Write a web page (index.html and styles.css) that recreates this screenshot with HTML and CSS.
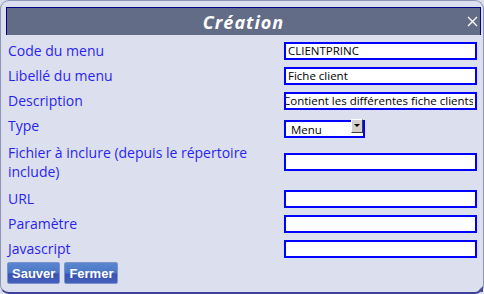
FILE: index.html
```html
<!DOCTYPE html>
<html lang="fr">
<head>
    <meta charset="UTF-8">
    <title>Création</title>
    <link rel="stylesheet" href="styles.css">
</head>
<body>
    <div class="dialog">
        <div class="titlebar">
            <span class="title">Création</span>
            <svg class="close" width="11" height="11" viewBox="0 0 11 11">
                <path d="M1 1 L10 10 M10 1 L1 10" stroke="#ffffff" stroke-width="1.3" fill="none"/>
            </svg>
        </div>

        <div class="form">
            <label class="label">Code du menu</label>
            <div class="field"><input class="input" type="text" value="CLIENTPRINC"></div>

            <label class="label">Libellé du menu</label>
            <div class="field"><input class="input" type="text" value="Fiche client"></div>

            <label class="label">Description</label>
            <div class="field"><input class="input scrolled" type="text" value="Contient les différentes fiche clients"></div>

            <label class="label">Type</label>
            <div class="field">
                <div class="select-wrap">
                    <select class="select">
                        <option>Menu</option>
                        <option>Lien</option>
                    </select>
                    <span class="select-arrow"></span>
                </div>
            </div>

            <label class="label label-tall">Fichier à inclure (depuis le répertoire include)</label>
            <div class="field"><input class="input" type="text"></div>

            <label class="label">URL</label>
            <div class="field"><input class="input" type="text"></div>

            <label class="label">Paramètre</label>
            <div class="field"><input class="input" type="text"></div>

            <label class="label">Javascript</label>
            <div class="field"><input class="input" type="text"></div>
        </div>

        <div class="buttons">
            <button class="button">Sauver</button>
            <button class="button">Fermer</button>
        </div>

        <span class="grip"></span>
    </div>
</body>
</html>
```

FILE: styles.css
```css
body {
    margin: 0;
    font-family: "Open Sans", sans-serif;
    background-color: #dce0ee;
}
.dialog {
    position: relative;
    box-sizing: border-box;
    width: 484px;
    height: 294px;
    background-color: #dce0ee;
    border: 1px solid #8d94b6;
    border-bottom: 2px solid #3d429c;
    border-radius: 9px;
}
.titlebar {
    position: relative;
    margin: 6px 2px 0 5px;
    height: 28px;
    box-sizing: border-box;
    background-color: #626c87;
    border: 1px solid #000080;
    border-bottom: none;
    display: flex;
    justify-content: center;
    align-items: center;
}
.title {
    color: #ffffff;
    font-size: 18px;
    font-weight: bold;
    font-style: italic;
    letter-spacing: 1px;
}
.close {
    position: absolute;
    right: 2px;
    top: 8px;
}
.form {
    display: grid;
    grid-template-columns: 276px 193px;
    row-gap: 2px;
    margin-top: 4px;
    padding-left: 7px;
}
.label {
    color: #2a1ff0;
    font-size: 14px;
    line-height: 19px;
    padding: 2px 0;
    display: flex;
    align-items: center;
}
.label-tall {
    padding: 4px 0;
}
.field {
    display: flex;
    align-items: center;
}
.input {
    box-sizing: border-box;
    width: 193px;
    height: 18px;
    margin: 0;
    padding: 0 2px;
    border: 2px solid #0000ff;
    background-color: #ffffff;
    font-family: "Open Sans", sans-serif;
    font-size: 11.5px;
    color: #000000;
    outline: none;
}
.scrolled {
    padding-left: 0;
    text-indent: -3px;
}
.select-wrap {
    position: relative;
    width: 81px;
    height: 18px;
}
.select {
    appearance: none;
    -webkit-appearance: none;
    box-sizing: border-box;
    width: 81px;
    height: 18px;
    margin: 0;
    padding: 0 0 0 5px;
    border: 2px solid #0000ff;
    border-radius: 0;
    background-color: #ffffff;
    font-family: "Open Sans", sans-serif;
    font-size: 11.5px;
    color: #000000;
}
.select-arrow {
    position: absolute;
    right: 2px;
    top: 2px;
    width: 12px;
    height: 14px;
    box-sizing: border-box;
    background-color: #d4d0c8;
    border: 1px solid;
    border-color: #ffffff #404040 #404040 #ffffff;
    pointer-events: none;
}
.select-arrow::after {
    content: "";
    position: absolute;
    left: 2px;
    top: 4px;
    border-left: 3px solid transparent;
    border-right: 3px solid transparent;
    border-top: 3px solid #000000;
}
.buttons {
    display: flex;
    gap: 4px;
    margin-top: 2px;
    padding-left: 6px;
}
.button {
    height: 22px;
    padding: 0 4px;
    border: 1px solid #7d92cc;
    border-radius: 2px;
    background: linear-gradient(#5a86cf 0%, #4a77c6 48%, #3a52b0 56%, #4560bd 100%);
    color: #ffffff;
    font-family: "Liberation Sans", Arial, sans-serif;
    font-size: 13px;
    font-weight: bold;
    cursor: pointer;
}
.grip {
    position: absolute;
    right: 0;
    bottom: 0;
    width: 0;
    height: 0;
    border-left: 6px solid transparent;
    border-bottom: 6px solid #4a4f90;
}
```
